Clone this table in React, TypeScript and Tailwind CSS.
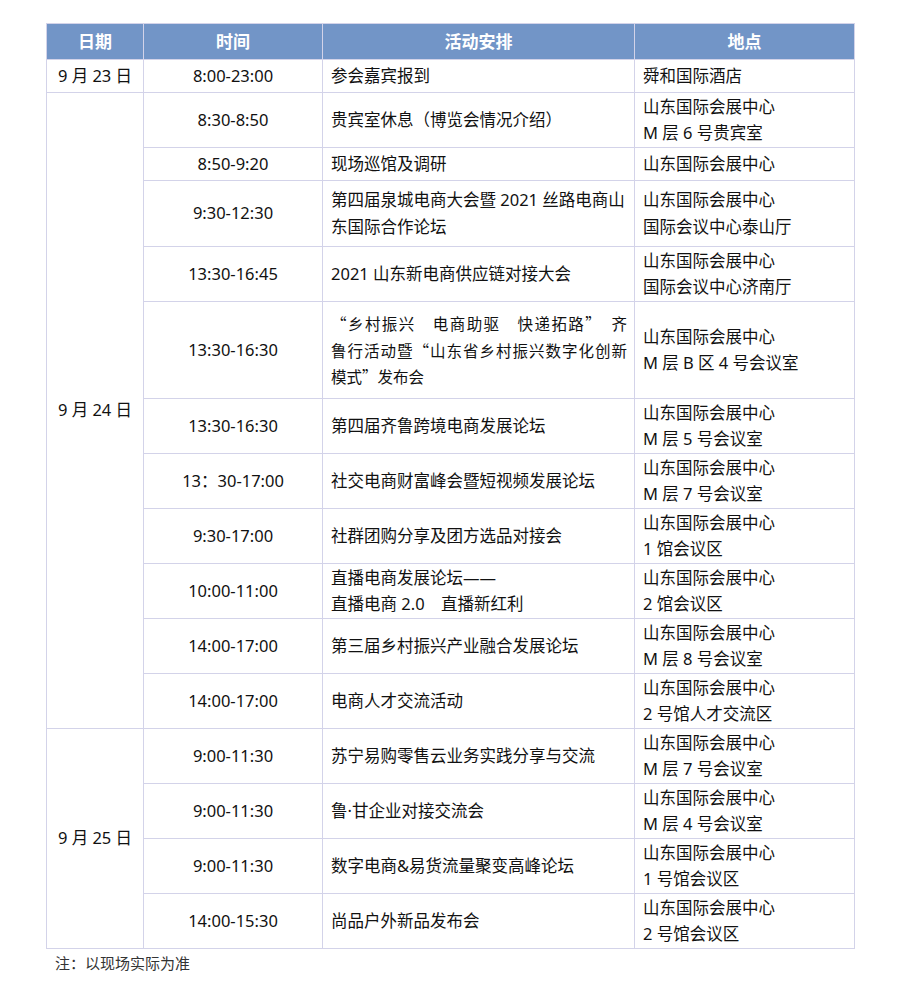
import React from "react"

type Item = {
  time: string
  activity: string[]
  place: string[]
  h: string
  justify?: boolean
}

type Group = {
  date: string
  items: Item[]
}

const HQ = "山东国际会展中心"

const schedule: Group[] = [
  {
    date: "9 月 23 日",
    items: [{ time: "8:00-23:00", activity: ["参会嘉宾报到"], place: ["舜和国际酒店"], h: "h-[33px]" }],
  },
  {
    date: "9 月 24 日",
    items: [
      { time: "8:30-8:50", activity: ["贵宾室休息（博览会情况介绍）"], place: [HQ, "M 层 6 号贵宾室"], h: "h-[55px]" },
      { time: "8:50-9:20", activity: ["现场巡馆及调研"], place: [HQ], h: "h-[33px]" },
      {
        time: "9:30-12:30",
        activity: ["第四届泉城电商大会暨 2021 丝路电商山", "东国际合作论坛"],
        place: [HQ, "国际会议中心泰山厅"],
        h: "h-[66px]",
      },
      { time: "13:30-16:45", activity: ["2021 山东新电商供应链对接大会"], place: [HQ, "国际会议中心济南厅"], h: "h-[55px]" },
      {
        time: "13:30-16:30",
        activity: ["“乡村振兴　电商助驱　快递拓路”　齐", "鲁行活动暨“山东省乡村振兴数字化创新", "模式”发布会"],
        place: [HQ, "M 层 B 区 4 号会议室"],
        h: "h-[97px]",
        justify: true,
      },
      { time: "13:30-16:30", activity: ["第四届齐鲁跨境电商发展论坛"], place: [HQ, "M 层 5 号会议室"], h: "h-[55px]" },
      { time: "13：30-17:00", activity: ["社交电商财富峰会暨短视频发展论坛"], place: [HQ, "M 层 7 号会议室"], h: "h-[55px]" },
      { time: "9:30-17:00", activity: ["社群团购分享及团方选品对接会"], place: [HQ, "1 馆会议区"], h: "h-[55px]" },
      {
        time: "10:00-11:00",
        activity: ["直播电商发展论坛——", "直播电商 2.0　直播新红利"],
        place: [HQ, "2 馆会议区"],
        h: "h-[55px]",
      },
      { time: "14:00-17:00", activity: ["第三届乡村振兴产业融合发展论坛"], place: [HQ, "M 层 8 号会议室"], h: "h-[55px]" },
      { time: "14:00-17:00", activity: ["电商人才交流活动"], place: [HQ, "2 号馆人才交流区"], h: "h-[55px]" },
    ],
  },
  {
    date: "9 月 25 日",
    items: [
      { time: "9:00-11:30", activity: ["苏宁易购零售云业务实践分享与交流"], place: [HQ, "M 层 7 号会议室"], h: "h-[55px]" },
      { time: "9:00-11:30", activity: ["鲁·甘企业对接交流会"], place: [HQ, "M 层 4 号会议室"], h: "h-[55px]" },
      { time: "9:00-11:30", activity: ["数字电商&易货流量聚变高峰论坛"], place: [HQ, "1 号馆会议区"], h: "h-[55px]" },
      { time: "14:00-15:30", activity: ["尚品户外新品发布会"], place: [HQ, "2 号馆会议区"], h: "h-[55px]" },
    ],
  },
]

const cell = "border border-[#d3d3e9] align-middle p-0"

function Lines({ lines, justify }: { lines: string[]; justify?: boolean }) {
  if (justify) {
    // this cell is set a little tighter in the source, with full-width CJK quotes
    return (
      <div className="text-[15.5px] font-['Noto_Sans_CJK_SC',sans-serif]">
        {lines.map((line, i) => (
          <div
            key={i}
            className={i < lines.length - 1 ? "whitespace-nowrap text-justify [text-align-last:justify]" : "whitespace-nowrap"}
          >
            {line}
          </div>
        ))}
      </div>
    )
  }
  return (
    <>
      {lines.map((line, i) => (
        <div key={i} className="whitespace-nowrap">
          {line}
        </div>
      ))}
    </>
  )
}

export default function App() {
  return (
    <div
      lang="zh-CN"
      className="min-h-[998px] w-[900px] bg-white pl-[46px] pt-[23px] text-[16.5px] text-[#111] font-['Noto_Sans','Noto_Sans_CJK_SC',sans-serif]"
    >
      <table className="table-fixed border-collapse">
        <colgroup>
          <col className="w-[97px]" />
          <col className="w-[179px]" />
          <col className="w-[312px]" />
          <col className="w-[220px]" />
        </colgroup>
        <thead>
          <tr className="h-[36px] bg-[#7295c7] text-[17px] text-white font-bold">
            <th className={cell}>日期</th>
            <th className={cell}>时间</th>
            <th className={cell}>活动安排</th>
            <th className={cell}>地点</th>
          </tr>
        </thead>
        <tbody className="leading-[26.5px]">
          {schedule.map((group) =>
            group.items.map((item, i) => (
              <tr key={group.date + i} className={item.h}>
                {i === 0 && (
                  <td rowSpan={group.items.length} className={`${cell} text-center`}>
                    {group.date}
                  </td>
                )}
                <td className={`${cell} text-center`}>{item.time}</td>
                <td className={`${cell} pl-[8px] pr-[7px]`}>
                  <Lines lines={item.activity} justify={item.justify} />
                </td>
                <td className={`${cell} pl-[8px] pr-[6px]`}>
                  <Lines lines={item.place} />
                </td>
              </tr>
            ))
          )}
        </tbody>
      </table>
      <p className="ml-[9px] mt-[2px] text-[15px] leading-[24px] text-[#333] font-['Noto_Sans_CJK_SC',serif]">
        注：以现场实际为准
      </p>
    </div>
  )
}
